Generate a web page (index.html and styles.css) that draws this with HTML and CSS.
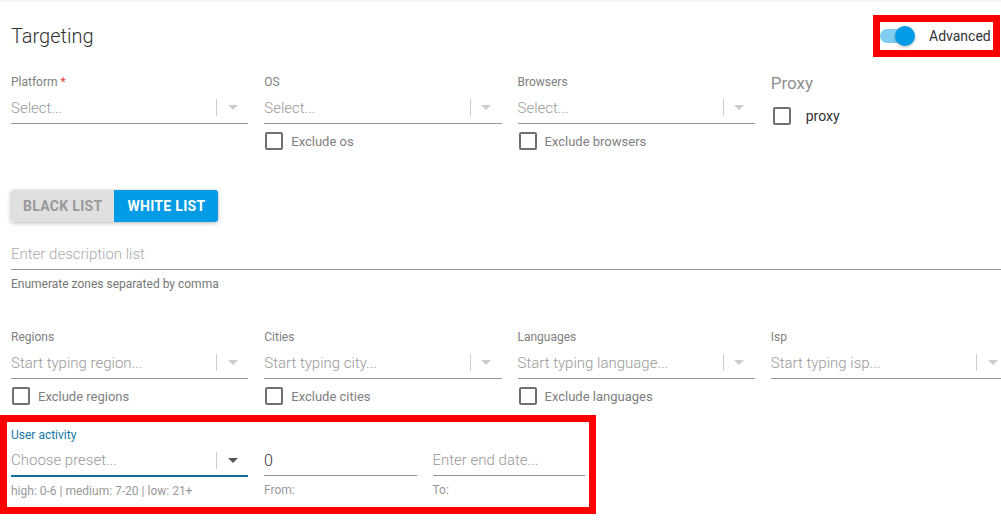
FILE: index.html
```html
<!DOCTYPE html>
<html lang="en">
<head>
    <meta charset="UTF-8">
    <meta name="viewport" content="width=device-width, initial-scale=1.0">
    <title>Targeting</title>
    <link rel="stylesheet" href="styles.css">
</head>
<body>
    <header class="page-header">
        <h2 class="page-title">Targeting</h2>
        <label class="switch highlight">
            <span class="switch-track"><span class="switch-knob"></span></span>
            <span class="switch-label">Advanced</span>
        </label>
    </header>

    <div class="field-grid">
        <div class="field">
            <div class="field-label">Platform <span class="required">*</span></div>
            <div class="select">
                <span class="placeholder">Select...</span>
                <span class="select-sep"></span>
                <span class="select-arrow"></span>
            </div>
        </div>
        <div class="field">
            <div class="field-label">OS</div>
            <div class="select">
                <span class="placeholder">Select...</span>
                <span class="select-sep"></span>
                <span class="select-arrow"></span>
            </div>
            <label class="check"><span class="check-box"></span>Exclude os</label>
        </div>
        <div class="field">
            <div class="field-label">Browsers</div>
            <div class="select">
                <span class="placeholder">Select...</span>
                <span class="select-sep"></span>
                <span class="select-arrow"></span>
            </div>
            <label class="check"><span class="check-box"></span>Exclude browsers</label>
        </div>
        <div class="proxy">
            <div class="proxy-title">Proxy</div>
            <label class="proxy-check"><span class="check-box"></span>proxy</label>
        </div>
    </div>

    <div class="list-toggle">
        <button class="list-btn">Black list</button>
        <button class="list-btn active">White list</button>
    </div>

    <div class="text-field">
        <div class="text-input"><span class="placeholder">Enter description list</span></div>
        <div class="helper">Enumerate zones separated by comma</div>
    </div>

    <div class="field-grid geo-row">
        <div class="field">
            <div class="field-label">Regions</div>
            <div class="select">
                <span class="placeholder">Start typing region...</span>
                <span class="select-sep"></span>
                <span class="select-arrow"></span>
            </div>
            <label class="check"><span class="check-box"></span>Exclude regions</label>
        </div>
        <div class="field">
            <div class="field-label">Cities</div>
            <div class="select">
                <span class="placeholder">Start typing city...</span>
                <span class="select-sep"></span>
                <span class="select-arrow"></span>
            </div>
            <label class="check"><span class="check-box"></span>Exclude cities</label>
        </div>
        <div class="field">
            <div class="field-label">Languages</div>
            <div class="select">
                <span class="placeholder">Start typing language...</span>
                <span class="select-sep"></span>
                <span class="select-arrow"></span>
            </div>
            <label class="check"><span class="check-box"></span>Exclude languages</label>
        </div>
        <div class="field">
            <div class="field-label">Isp</div>
            <div class="select">
                <span class="placeholder">Start typing isp...</span>
                <span class="select-sep"></span>
                <span class="select-arrow"></span>
            </div>
        </div>
    </div>

    <div class="activity-row highlight">
        <div class="field">
            <div class="field-label focused">User activity</div>
            <div class="select focused">
                <span class="placeholder">Choose preset...</span>
                <span class="select-sep"></span>
                <span class="select-arrow dark"></span>
            </div>
            <div class="helper">high: 0-6 | medium: 7-20 | low: 21+</div>
        </div>
        <div class="field">
            <div class="field-label"></div>
            <div class="date-input"><span class="value">0</span></div>
            <div class="helper">From:</div>
        </div>
        <div class="field">
            <div class="field-label"></div>
            <div class="date-input"><span class="placeholder">Enter end date...</span></div>
            <div class="helper">To:</div>
        </div>
    </div>
</body>
</html>
```

FILE: styles.css
```css
html, body {
    margin: 0;
    overflow: hidden;
}

body {
    font-family: Roboto, 'Liberation Sans', sans-serif;
    color: #333;
    background-color: #fff;
    padding: 0 0 0 11px;
    width: 997px;
    min-height: 530px;
    box-shadow: inset 0 2px 2px -1px rgba(0,0,0,0.07);
}

/* annotation boxes */
.highlight {
    outline: 7px solid #ff0000;
}

.page-header {
    display: flex;
    align-items: center;
    justify-content: space-between;
    height: 28px;
    margin-top: 22px;
    padding-right: 15px;
}

.page-title {
    margin: 0;
    font-size: 20px;
    font-weight: 300;
    color: #333;
    line-height: 24px;
}

.switch {
    display: flex;
    align-items: center;
    height: 28px;
    width: 113px;
    box-sizing: border-box;
}

.switch-track {
    position: relative;
    width: 34px;
    height: 14px;
    border-radius: 7px;
    background-color: #80cdf1;
}

.switch-knob {
    position: absolute;
    right: -1px;
    top: -3px;
    width: 20px;
    height: 20px;
    border-radius: 50%;
    background-color: #039be5;
    box-shadow: 0 1px 3px rgba(0,0,0,0.3);
}

.switch-label {
    margin-left: 15px;
    font-size: 14px;
    color: #333;
}

.field-grid {
    display: grid;
    grid-template-columns: repeat(4, 1fr);
    gap: 16px;
    margin-top: 24px;
}

.geo-row {
    margin-top: 38px;
}

.field-label {
    font-size: 12px;
    line-height: 16px;
    height: 16px;
    margin-bottom: 2px;
    color: #808080;
}

.field-label.focused {
    color: #1479a8;
}

.required {
    color: #e53935;
}

.select {
    display: flex;
    align-items: center;
    height: 32px;
    box-sizing: border-box;
    border-bottom: 1px solid #959595;
}

.select.focused {
    border-bottom: 2px solid #0d6f99;
}

.placeholder {
    flex: 1;
    font-size: 15px;
    font-weight: 300;
    color: #999;
    white-space: nowrap;
}

.select-sep {
    width: 1px;
    height: 17px;
    background-color: #ccc;
}

.select-arrow {
    width: 31px;
    display: flex;
    justify-content: center;
}

.select-arrow::after {
    content: '';
    border-left: 5px solid transparent;
    border-right: 5px solid transparent;
    border-top: 5px solid #ccc;
}

.select-arrow.dark::after {
    border-top-color: #555;
}

.check {
    display: flex;
    align-items: center;
    gap: 8px;
    margin-top: 8px;
    margin-left: 1px;
    font-size: 13px;
    color: #808080;
}

.check-box {
    width: 18px;
    height: 18px;
    box-sizing: border-box;
    border: 2px solid #707070;
    border-radius: 2px;
}

.proxy-title {
    font-size: 17px;
    line-height: 18px;
    color: #8f8f8f;
}

.proxy-check {
    display: flex;
    align-items: center;
    gap: 15px;
    margin-top: 15px;
    margin-left: 2px;
    font-size: 14px;
    color: #333;
}

.list-toggle {
    display: inline-flex;
    margin-top: 40px;
    border-radius: 3px;
    box-shadow: 0 1px 4px rgba(0,0,0,0.3);
    overflow: hidden;
}

.list-btn {
    height: 32px;
    padding: 0 12px;
    border: none;
    font-family: inherit;
    font-size: 14px;
    font-weight: 700;
    letter-spacing: 0.3px;
    text-transform: uppercase;
    background-color: #e0e0e0;
    color: #999;
    cursor: pointer;
}

.list-btn.active {
    padding: 0 13px;
    background-color: #039be5;
    color: #fff;
}

.text-field {
    margin-top: 16px;
}

.text-input {
    display: flex;
    align-items: center;
    height: 32px;
    box-sizing: border-box;
    border-bottom: 1px solid #959595;
}

.text-input .placeholder {
    color: #aaa;
}

.helper {
    margin-top: 7px;
    font-size: 12px;
    line-height: 14px;
    color: #777;
}

.activity-row {
    display: grid;
    grid-template-columns: 237px 1fr 1fr;
    gap: 16px;
    width: 574px;
    margin-top: 21px;
    padding: 1px 0 5px;
    outline-offset: 4px;
}

.activity-row .helper {
    color: #999;
}

.date-input {
    display: flex;
    align-items: center;
    height: 31px;
    box-sizing: border-box;
    border-bottom: 1px solid #959595;
}

.value {
    font-size: 16px;
    font-weight: 300;
    color: #333;
}
```
